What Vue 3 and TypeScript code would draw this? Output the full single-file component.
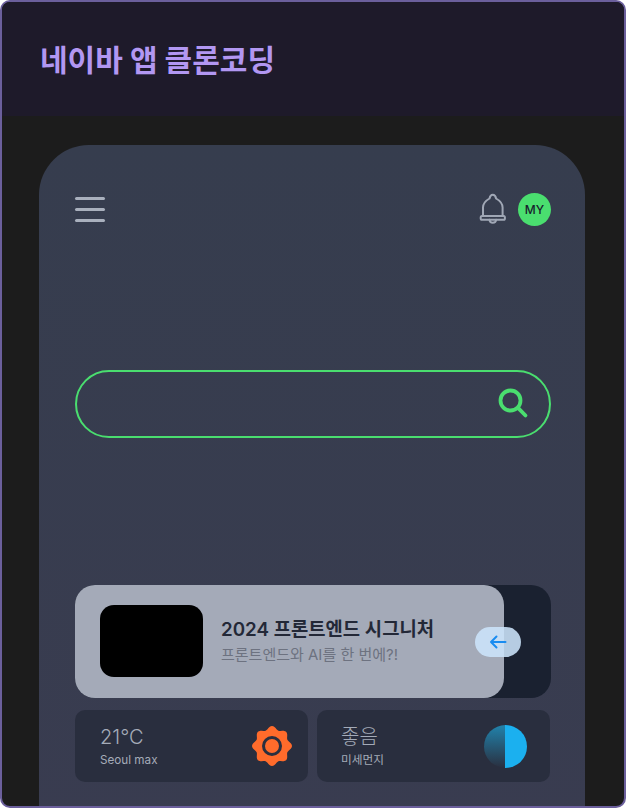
<script setup lang="ts">
// 네이바 앱 클론코딩 — phone mockup
interface Stat {
  value: string
  label: string
  kind: 'sun' | 'dust'
}

const stats: Stat[] = [
  { value: '21°C', label: 'Seoul max', kind: 'sun' },
  { value: '좋음', label: '미세먼지', kind: 'dust' },
]

// 8 lobes around the sun icon
function sunPath(): string {
  const pts: string[] = []
  for (let i = 0; i < 96; i++) {
    const a = (i / 96) * Math.PI * 2
    const r = 18.3 + 1.7 * Math.cos(8 * a)
    pts.push(`${(20 + r * Math.sin(a)).toFixed(2)} ${(20 - r * Math.cos(a)).toFixed(2)}`)
  }
  return `M${pts.join('L')}Z`
}
</script>

<template>
  <div class="frame">
    <header class="top">
      <h1>네이바 앱 클론코딩</h1>
    </header>
    <main class="stage">
      <section class="phone">
        <div class="nav">
          <button class="menu" aria-label="메뉴"><i /><i /><i /></button>
          <div class="nav-right">
            <svg class="bell" width="30" height="32" viewBox="0 0 30 32" fill="none" stroke="#a0a7b5" stroke-width="2" stroke-linejoin="round" stroke-linecap="round">
              <path d="M5 23V14.500C5 9.500 8 7.500 11.500 5.500C12 3 13.300 1.800 14.800 1.800C16.300 1.800 17.600 3 18.100 5.500C21.600 7.500 24.600 9.500 24.600 14.500V23" />
              <path d="M4 23H25.600C27.400 23 27.400 26.800 25.600 26.800H4C2.200 26.800 2.200 23 4 23Z" />
              <path d="M11.500 26.800C11.800 30.800 17.800 30.800 18.100 26.800" />
            </svg>
            <span class="avatar">MY</span>
          </div>
        </div>

        <div class="search">
          <svg width="32" height="32" viewBox="0 0 32 32" fill="none" stroke="#4ade6f" stroke-width="3.800" stroke-linecap="round">
            <circle cx="13.500" cy="12.500" r="10" />
            <path d="M21 19.800L28.500 27.500" />
          </svg>
        </div>

        <div class="banner">
          <div class="banner-card">
            <div class="thumb" />
            <div class="banner-text">
              <strong>2024 프론트엔드 시그니처</strong>
              <span>프론트엔드와 AI를 한 번에?!</span>
            </div>
          </div>
          <button class="back" aria-label="이전">
            <svg width="20" height="18" viewBox="0 0 20 18" fill="none" stroke="#1a8cf0" stroke-width="2" stroke-linecap="round" stroke-linejoin="round">
              <path d="M17.500 9H3M8.500 3.500L3 9L8.500 14.500" />
            </svg>
          </button>
        </div>

        <div class="stats">
          <div v-for="stat in stats" :key="stat.label" class="stat" :class="`stat--${stat.kind}`">
            <div class="stat-text">
              <span class="stat-value">{{ stat.value }}</span>
              <span class="stat-label">{{ stat.label }}</span>
            </div>
            <svg v-if="stat.kind === 'sun'" width="40" height="40" viewBox="0 0 40 40">
              <path fill="#ff6b2b" :d="sunPath()" />
              <circle cx="20" cy="20" r="8.500" fill="none" stroke="#2a2f3f" stroke-width="3" />
            </svg>
            <span v-else class="dust" />
          </div>
        </div>
      </section>
    </main>
  </div>
</template>

<style>
html,
body {
  margin: 0;
  background: #fff;
}
</style>

<style scoped>
.frame {
  box-sizing: border-box;
  width: 626px;
  height: 808px;
  border: 2px solid #6b5f9c;
  border-radius: 10px;
  overflow: hidden;
  background: #1c1c1c;
  font-family: Inter, "Noto Sans CJK KR", sans-serif;
  display: flex;
  flex-direction: column;
}

.top {
  height: 114px;
  flex-shrink: 0;
  background: #1e1a2a;
  padding: 0 38px;
  display: flex;
  align-items: flex-start;
}

.top h1 {
  margin: 38px 0 0;
  font-size: 30px;
  line-height: 40px;
  font-weight: 700;
  color: #b297f2;
}

.stage {
  flex: 1;
  min-height: 0;
  padding: 29px 39px 0 37px;
}

.phone {
  height: 700px;
  box-sizing: border-box;
  background: linear-gradient(180deg, #363d4e, #393c50);
  border-radius: 50px 50px 0 0;
  padding: 47px 34px 0 36px;
}

.nav {
  display: flex;
  align-items: center;
  justify-content: space-between;
  height: 34px;
}

.menu {
  all: unset;
  width: 30px;
  display: flex;
  flex-direction: column;
  gap: 8px;
}

.menu i {
  display: block;
  height: 3px;
  border-radius: 2px;
  background: #a9b0bd;
}

.nav-right {
  display: flex;
  align-items: center;
  gap: 10px;
}

.bell {
  display: block;
}

.avatar {
  width: 33px;
  height: 33px;
  border-radius: 50%;
  background: #4ade6f;
  color: #17202c;
  font-size: 12px;
  font-weight: 500;
  display: flex;
  align-items: center;
  justify-content: center;
}

.search {
  box-sizing: border-box;
  height: 68px;
  margin-top: 144px;
  border: 2px solid #4ade6f;
  border-radius: 34px;
  display: flex;
  align-items: center;
  justify-content: flex-end;
  padding-right: 20px;
}

.banner {
  position: relative;
  height: 113px;
  margin-top: 147px;
  border-radius: 20px;
  background: #1a2130;
}

.banner-card {
  box-sizing: border-box;
  width: 429px;
  height: 100%;
  border-radius: 20px;
  background: #a4aab8;
  padding: 20px 25px;
  display: flex;
  align-items: center;
  gap: 18px;
}

.thumb {
  width: 103px;
  height: 72px;
  flex-shrink: 0;
  margin-top: -1px;
  border-radius: 14px;
  background: #000;
}

.banner-text {
  display: flex;
  flex-direction: column;
  gap: 1px;
}

.banner-text strong {
  font-size: 18.8px;
  line-height: 26px;
  font-weight: 600;
  color: #232837;
}

.banner-text span {
  font-size: 15px;
  line-height: 22px;
  color: #6d7280;
}

.back {
  all: unset;
  position: absolute;
  left: 400px;
  top: 42px;
  width: 46px;
  height: 30px;
  border-radius: 15px;
  background: rgba(204, 228, 250, 0.88);
  display: flex;
  align-items: center;
  justify-content: center;
}

.stats {
  display: grid;
  grid-template-columns: 233px 233px;
  gap: 9px;
  margin-top: 12px;
}

.stat {
  box-sizing: border-box;
  height: 72px;
  border-radius: 10px;
  background: #292e3e;
  padding: 0 16px 0 24px;
  display: flex;
  align-items: center;
  justify-content: space-between;
}

.stat--sun {
  padding-left: 25px;
}

.stat--dust {
  padding-right: 23px;
}

.stat-text {
  display: flex;
  flex-direction: column;
  margin-top: 1px;
}

.stat-value {
  font-size: 20px;
  line-height: 27px;
  font-weight: 300;
  color: #a4abb8;
}

.stat-label {
  font-size: 11.7px;
  line-height: 18px;
  color: #a4abb8;
}

.dust {
  width: 43px;
  height: 43px;
  border-radius: 50%;
  background: linear-gradient(90deg, transparent 50%, #1bb0ef 50%), linear-gradient(180deg, #2183ac, #2a2f3f);
}
</style>
